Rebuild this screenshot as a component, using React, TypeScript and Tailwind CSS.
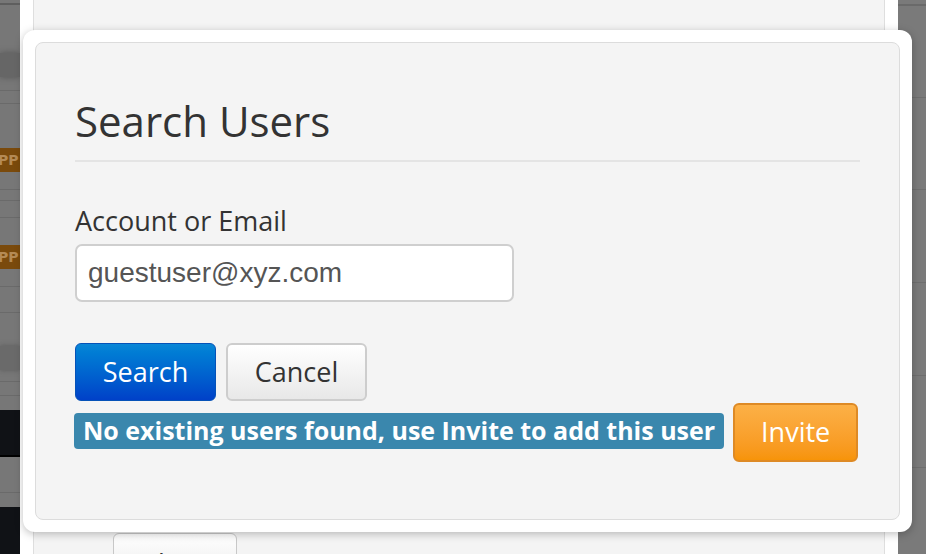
import React from "react";

function LeftStrip() {
  return (
    <div className="flex h-full w-[20px] shrink-0 flex-col bg-[#777777]">
      <div className="h-[3px]" />
      <div className="h-[2px] bg-[#5e5e5e]" />
      <div className="h-[48px]" />
      <div className="h-[24px] bg-[#666] shadow-[0_0_6px_#555]" />
      <div className="h-[13px]" />
      <div className="h-[1px] bg-[#6a6a6a]" />
      <div className="h-[12px]" />
      <div className="h-[1px] bg-[#6a6a6a]" />
      <div className="h-[44px]" />
      <div className="flex h-[24px] items-center overflow-hidden bg-[#7a4a0c] text-[14px] font-bold text-[#b48a55]" style={{ fontFamily: "'DejaVu Sans', sans-serif" }}>
        <span className="-ml-[2px]">PP</span>
      </div>
      <div className="h-[17px]" />
      <div className="h-[1px] bg-[#6a6a6a]" />
      <div className="h-[10px]" />
      <div className="h-[1px] bg-[#6a6a6a]" />
      <div className="h-[16px]" />
      <div className="h-[1px] bg-[#6a6a6a]" />
      <div className="h-[27px]" />
      <div className="flex h-[24px] items-center overflow-hidden bg-[#7a4a0c] text-[14px] font-bold text-[#b48a55]" style={{ fontFamily: "'DejaVu Sans', sans-serif" }}>
        <span className="-ml-[2px]">PP</span>
      </div>
      <div className="h-[17px]" />
      <div className="h-[1px] bg-[#6a6a6a]" />
      <div className="h-[25px]" />
      <div className="h-[1px] bg-[#6a6a6a]" />
      <div className="h-[33px]" />
      <div className="h-[24px] bg-[#6a6a6a] shadow-[0_0_5px_#5a5a5a]" />
      <div className="h-[11px]" />
      <div className="h-[1px] bg-[#6a6a6a]" />
      <div className="h-[13px]" />
      <div className="h-[1px] bg-[#6a6a6a]" />
      <div className="h-[14px]" />
      <div className="h-[45px] bg-[#101216]" />
      <div className="h-[2px] bg-[#000]" />
      <div className="h-[35px]" />
      <div className="h-[1px] bg-[#6a6a6a]" />
      <div className="h-[14px]" />
      <div className="flex-1 bg-[#101216]" />
    </div>
  );
}

function RightStrip() {
  return (
    <div className="flex h-full flex-1 flex-col bg-[#7a7a7a]">
      <div className="h-[4px]" />
      <div className="h-[2px] bg-[#6a6a6a]" />
      <div className="h-[91px]" />
      <div className="h-[1px] bg-[#6e6e6e]" />
      <div className="h-[91px]" />
      <div className="h-[1px] bg-[#6e6e6e]" />
      <div className="h-[92px]" />
      <div className="h-[1px] bg-[#6e6e6e]" />
      <div className="h-[92px]" />
      <div className="h-[1px] bg-[#6e6e6e]" />
      <div className="h-[91px]" />
      <div className="h-[1px] bg-[#6e6e6e]" />
    </div>
  );
}

export default function App() {
  const ui = { fontFamily: "'Open Sans', 'DejaVu Sans', sans-serif" };
  return (
    <div className="relative h-[554px] w-[926px] overflow-hidden bg-[#777]" style={ui}>
      {/* background page */}
      <div className="flex h-full w-full">
        <LeftStrip />
        <div className="h-full w-[878px] shrink-0 bg-white px-[13px]">
          <div className="h-full border-x border-[#dedede] bg-[#f4f4f4] pl-[79px] pt-[533px]">
            <div className="flex h-[57px] w-[124px] justify-center rounded-[6px] border border-[#c8c8c8] bg-gradient-to-b from-[#ffffff] to-[#e6e6e6] pt-[10px] text-[27px] text-[#333]">
              Close
            </div>
          </div>
        </div>
        <RightStrip />
      </div>

      {/* top dialog */}
      <div className="absolute left-[23px] top-[30px] h-[502px] w-[889px] rounded-[12px] bg-white p-[12px] shadow-[0_2px_8px_rgba(0,0,0,0.25)]">
        <div className="flex h-full flex-col rounded-[8px] border border-[#dcdcdc] bg-[#f4f4f4] pl-[39px] pr-[39px] pt-[50px]">
          <h1 className="text-[42px] leading-[56px] text-[#333]">Search Users</h1>
          <div className="mt-[11px] h-[2px] bg-[#e4e4e4]" />
          <label className="mt-[42px] text-[27px] leading-[34px] text-[#333]">Account or Email</label>
          <div className="mt-[6px] flex h-[58px] w-[439px] items-center rounded-[7px] border-2 border-[#cfcfcf] bg-white pl-[11px] text-[28px] text-[#555]" style={{ fontFamily: "'Liberation Sans', Arial, sans-serif" }}>
            guestuser@xyz.com
          </div>
          <div className="mt-[41px] flex gap-[10px]">
            <div className="flex h-[58px] w-[141px] items-center justify-center rounded-[6px] border border-[#0552b8] bg-gradient-to-b from-[#0a86d6] to-[#0040c8] text-[27px] font-medium text-white">
              Search
            </div>
            <div className="flex h-[58px] w-[141px] items-center justify-center rounded-[6px] border-2 border-[#cdcdcd] bg-gradient-to-b from-[#ffffff] to-[#e8e8e8] text-[27px] text-[#333]">
              Cancel
            </div>
          </div>
          <div className="mt-[2px] flex items-start gap-[9px]">
            <div className="-ml-[1px] mt-[10px] flex h-[36px] shrink-0 items-center whitespace-nowrap rounded-[4px] bg-[#3a87ad] px-[9px] text-[25px] font-bold text-white">
              No existing users found, use Invite to add this user
            </div>
            <div className="flex h-[59px] w-[125px] shrink-0 items-center justify-center rounded-[6px] border-2 border-[#de8a25] bg-gradient-to-b from-[#fcb046] to-[#f79408] text-[27px] font-medium text-white">
              Invite
            </div>
          </div>
        </div>
      </div>
    </div>
  );
}
